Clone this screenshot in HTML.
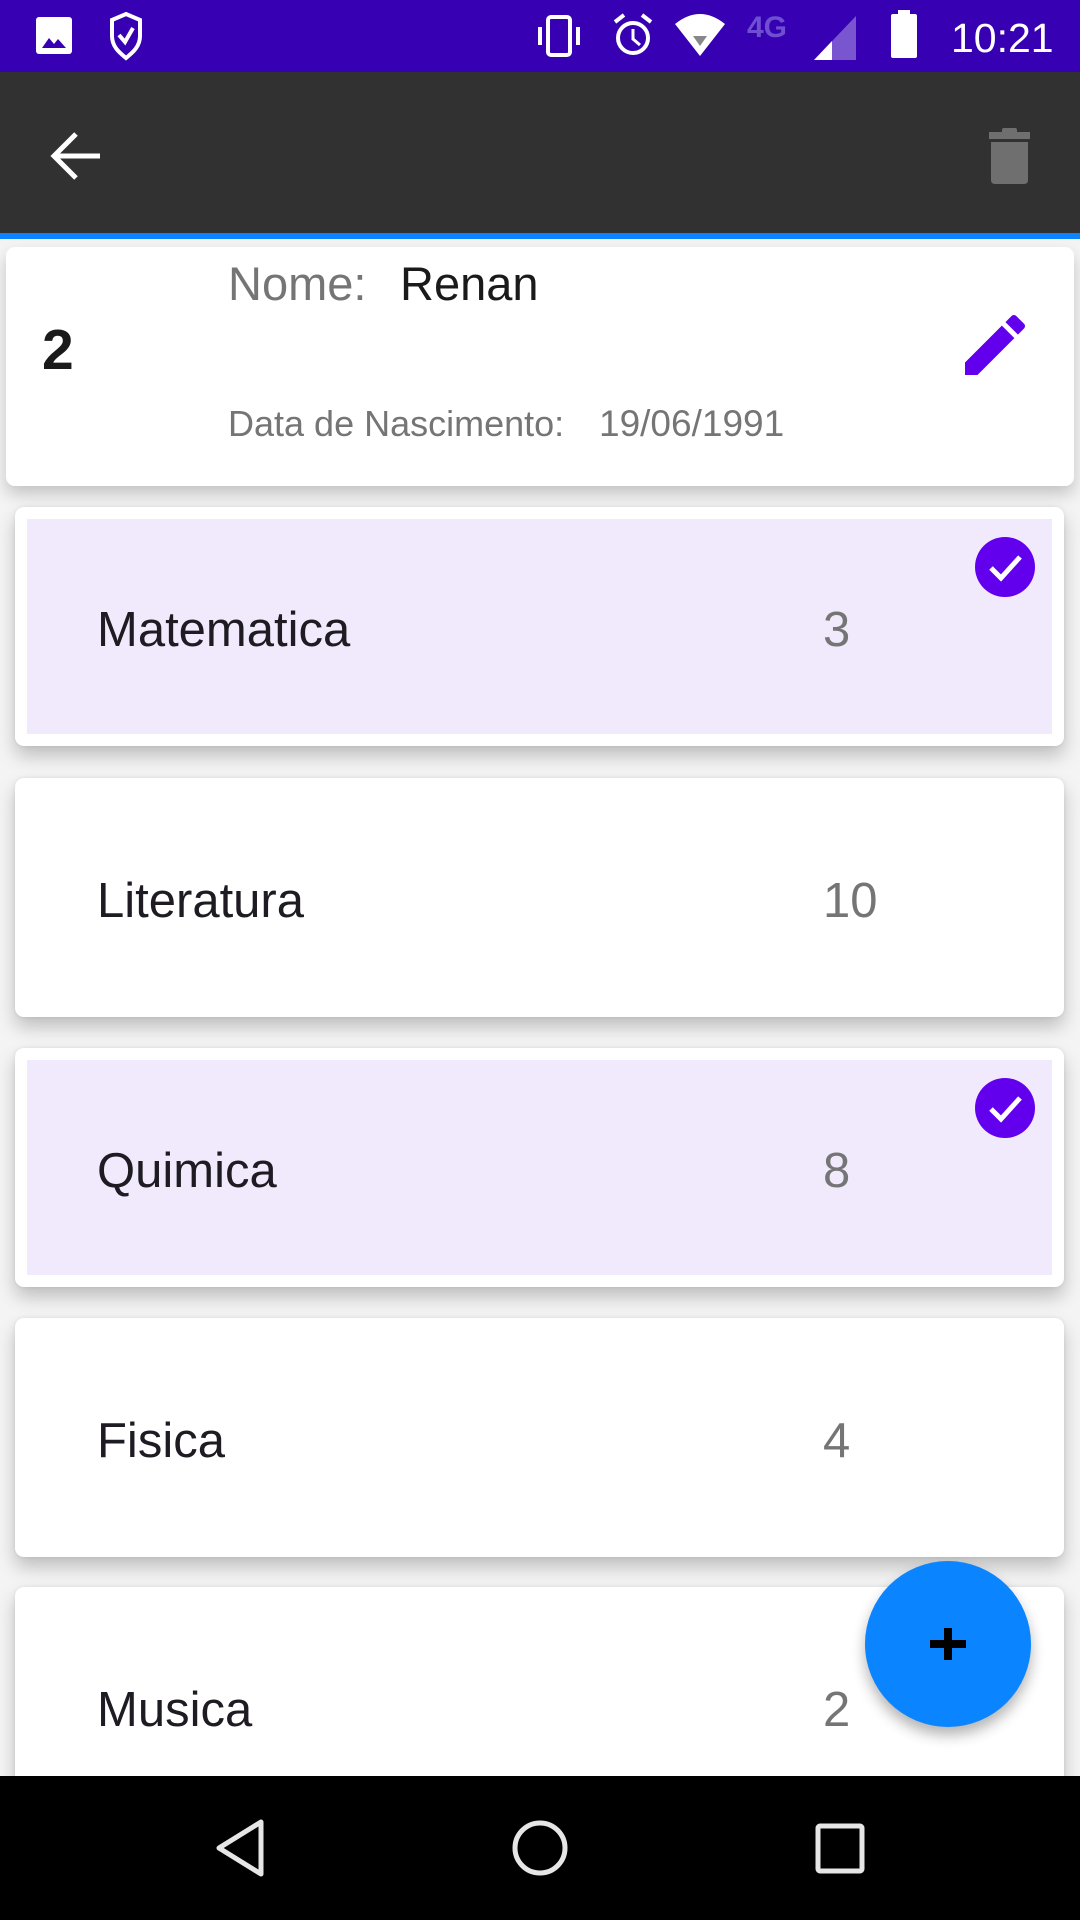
<!DOCTYPE html>
<html><head><meta charset="utf-8"><style>
*{margin:0;padding:0;box-sizing:border-box}
body{width:1080px;height:1920px;position:relative;overflow:hidden;background:#f4f4f4;font-family:"Liberation Sans",Roboto,sans-serif}
.abs{position:absolute;white-space:nowrap}
.card{position:absolute;left:15px;width:1049px;height:239px;background:#fff;border-radius:9px;box-shadow:0 10px 18px rgba(0,0,0,0.22),0 0 4px rgba(0,0,0,0.08)}
.sel{position:absolute;left:12px;top:12px;right:12px;bottom:12px;background:#f1eafd}
.name{position:absolute;left:82px;top:95px;font-size:49px;color:#1e1b22;line-height:56px;white-space:nowrap}
.num{position:absolute;left:808px;top:95px;font-size:49px;color:#757575;line-height:56px}
.chk{position:absolute;left:960px;top:30px;width:60px;height:60px;border-radius:50%;background:#6200ee}
</style></head><body>
<div class="abs" style="left:0;top:0;width:1080px;height:72px;background:#3700b3"></div>
<svg class="abs" style="left:0;top:0" width="1080" height="72">
<rect x="36" y="17" width="36" height="37" rx="3" fill="#fff"/>
<path d="M42 48 L49 38 L54 44 L58 39 L66 48Z" fill="#3700b3"/>
<path d="M126 14 L140 20 V36 C140 47 132 53 126 58 C120 53 112 47 112 36 V20Z" fill="none" stroke="#fff" stroke-width="4"/>
<path d="M119 35 L125 42 L133 28" fill="none" stroke="#fff" stroke-width="4"/>
<rect x="548" y="17" width="22" height="38" rx="3" fill="none" stroke="#fff" stroke-width="4"/>
<rect x="538" y="27" width="4" height="18" fill="#fff"/><rect x="576" y="27" width="4" height="18" fill="#fff"/>
<circle cx="633" cy="38" r="15" fill="none" stroke="#fff" stroke-width="4"/>
<path d="M633 29 V39 L640 45" fill="none" stroke="#fff" stroke-width="3"/>
<path d="M615 22 L624 15 M651 22 L642 15" stroke="#fff" stroke-width="4"/>
<path d="M675 24 Q700 4 725 24 L700 56Z" fill="#fff"/>
<path d="M693 36 L707 36 L700 46Z" fill="#888"/>
<text x="747" y="37" font-family="Liberation Sans" font-weight="bold" font-size="30" fill="#6e4fd0">4G</text>
<path d="M814 60 L856 16 V60Z" fill="#7a55d0"/><path d="M814 60 L832 41 V60Z" fill="#fff"/>
<rect x="891" y="14" width="26" height="44" rx="2" fill="#fff"/><rect x="898" y="10" width="12" height="5" fill="#fff"/>
<text x="951" y="52" font-family="Liberation Sans" font-size="41" fill="#fff">10:21</text>
</svg>
<div class="abs" style="left:0;top:72px;width:1080px;height:161px;background:#313131"></div>
<div class="abs" style="left:0;top:233px;width:1080px;height:6px;background:#0a84ff"></div>
<svg class="abs" style="left:0;top:72px" width="1080" height="161">
<path d="M100 84 H56 M76 62 L54 84 L76 106" fill="none" stroke="#fff" stroke-width="5"/>
<rect x="989" y="60" width="41" height="7" fill="#6f6f6f"/>
<rect x="1002" y="56" width="15" height="6" rx="2" fill="#6f6f6f"/>
<path d="M991 70 H1028 V108 Q1028 112 1024 112 H995 Q991 112 991 108Z" fill="#6f6f6f"/>
</svg>
<div class="abs" style="left:6px;top:247px;width:1068px;height:239px;background:#fff;border-radius:9px;box-shadow:0 8px 16px rgba(0,0,0,0.2)"></div>
<div class="abs" style="left:42px;top:317px;font-size:57px;font-weight:bold;color:#1a1a1a">2</div>
<div class="abs" style="left:228px;top:256px;font-size:47px;color:#757575">Nome:</div>
<div class="abs" style="left:400px;top:256px;font-size:47px;color:#1a1a1a">Renan</div>
<div class="abs" style="left:228px;top:403px;font-size:36px;color:#757575">Data de Nascimento:</div>
<div class="abs" style="left:599px;top:403px;font-size:37px;color:#757575">19/06/1991</div>
<svg class="abs" style="left:965px;top:315px" width="60" height="60" viewBox="3 3 18 18"><path d="M3 17.25V21h3.75L17.81 9.94l-3.75-3.75L3 17.25zM20.71 7.04a1 1 0 0 0 0-1.41l-2.34-2.34a1 1 0 0 0-1.41 0l-1.83 1.83 3.75 3.75 1.830-1.83z" fill="#6200ee"/></svg>

<div class="card" style="top:507px"><div class="sel"></div><div class="name">Matematica</div><div class="num">3</div>
<div class="chk"><svg width="60" height="60"><path d="M16 31 L26 41 L45 20" fill="none" stroke="#fff" stroke-width="5"/></svg></div></div>
<div class="card" style="top:778px"><div class="name">Literatura</div><div class="num">10</div></div>
<div class="card" style="top:1048px"><div class="sel"></div><div class="name">Quimica</div><div class="num">8</div>
<div class="chk"><svg width="60" height="60"><path d="M16 31 L26 41 L45 20" fill="none" stroke="#fff" stroke-width="5"/></svg></div></div>
<div class="card" style="top:1318px"><div class="name">Fisica</div><div class="num">4</div></div>
<div class="card" style="top:1587px"><div class="name">Musica</div><div class="num">2</div></div>

<div class="abs" style="left:865px;top:1561px;width:166px;height:166px;border-radius:50%;background:#0a84ff;box-shadow:0 8px 14px rgba(0,0,0,0.3)"></div>
<svg class="abs" style="left:918px;top:1614px" width="60" height="60"><path d="M30 14 V46 M12 30 H48" stroke="#000" stroke-width="8"/></svg>

<div class="abs" style="left:0;top:1776px;width:1080px;height:144px;background:#000"></div>
<svg class="abs" style="left:0;top:1776px" width="1080" height="144">
<path d="M261 46 L219 72 L261 98Z" fill="none" stroke="#e6e6e6" stroke-width="5" stroke-linejoin="round"/>
<circle cx="540" cy="72" r="25" fill="none" stroke="#e6e6e6" stroke-width="5"/>
<rect x="818" y="50" width="44" height="45" rx="2" fill="none" stroke="#e6e6e6" stroke-width="5"/>
</svg>
</body></html>
